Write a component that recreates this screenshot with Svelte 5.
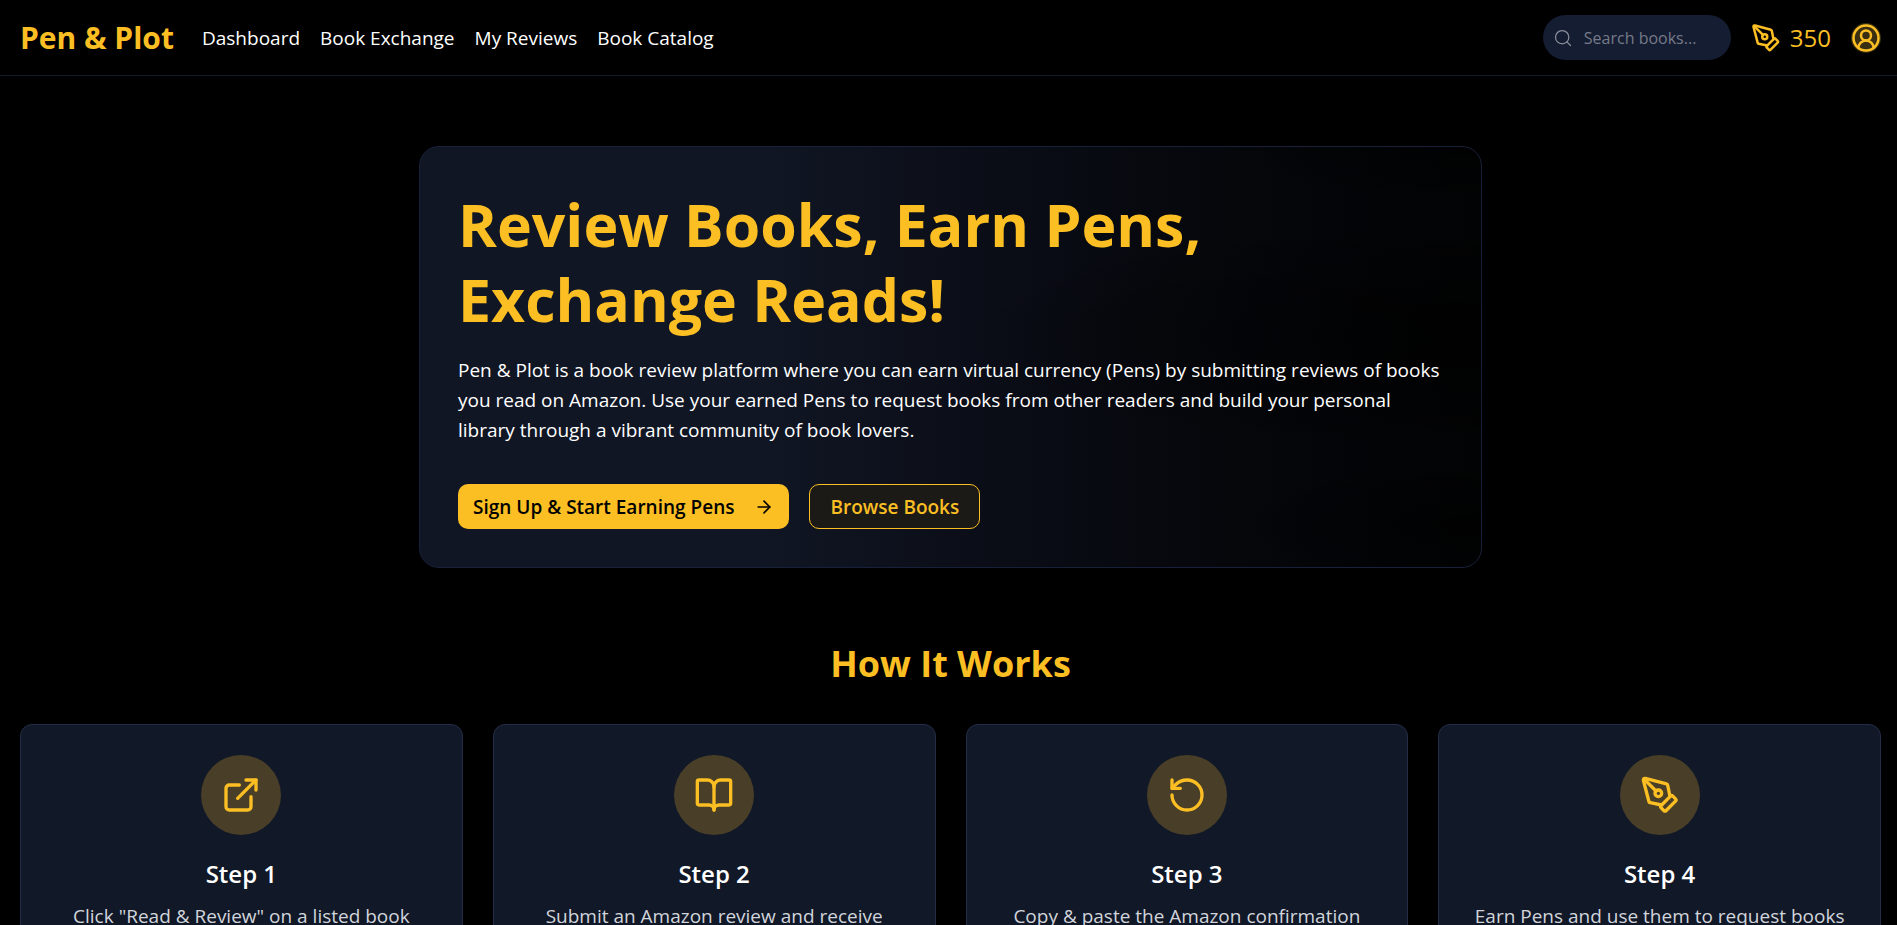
<script>
  let search = '';

  const links = ['Dashboard', 'Book Exchange', 'My Reviews', 'Book Catalog'];

  const steps = [
    { icon: 'external', title: 'Step 1', text: 'Click "Read & Review" on a listed book' },
    { icon: 'book', title: 'Step 2', text: 'Submit an Amazon review and receive' },
    { icon: 'rotate', title: 'Step 3', text: 'Copy & paste the Amazon confirmation' },
    { icon: 'pen', title: 'Step 4', text: 'Earn Pens and use them to request books' }
  ];

  const icons = {
    external: ['M15 3h6v6', 'M10 14 21 3', 'M18 13v6a2 2 0 0 1-2 2H5a2 2 0 0 1-2-2V8a2 2 0 0 1 2-2h6'],
    book: [
      'M12 7v14',
      'M3 18a1 1 0 0 1-1-1V4a1 1 0 0 1 1-1h5a4 4 0 0 1 4 4 4 4 0 0 1 4-4h5a1 1 0 0 1 1 1v13a1 1 0 0 1-1 1h-6a3 3 0 0 0-3 3 3 3 0 0 0-3-3z'
    ],
    rotate: ['M3 12a9 9 0 1 0 9-9 9.75 9.75 0 0 0-6.74 2.74L3 8', 'M3 3v5h5'],
    pen: [
      'M15.707 21.293a1 1 0 0 1-1.414 0l-1.586-1.586a1 1 0 0 1 0-1.414l5.586-5.586a1 1 0 0 1 1.414 0l1.586 1.586a1 1 0 0 1 0 1.414z',
      'm18 13-1.375-6.874a1 1 0 0 0-.746-.776L3.235 2.028a1 1 0 0 0-1.207 1.207L5.35 15.879a1 1 0 0 0 .776.746L13 18',
      'm2.3 2.3 7.286 7.286',
      'M9 11a2 2 0 1 0 4 0a2 2 0 1 0-4 0'
    ],
    search: ['m21 21-4.3-4.3', 'M3 11a8 8 0 1 0 16 0a8 8 0 1 0-16 0'],
    arrow: ['M5 12h14', 'm12 5 7 7-7 7'],
    user: [
      'M18 20a6 6 0 0 0-12 0',
      'M8 10a4 4 0 1 0 8 0a4 4 0 1 0-8 0',
      'M2 12a10 10 0 1 0 20 0a10 10 0 1 0-20 0'
    ]
  };
</script>

{#snippet icon(name, size, stroke = 2)}
  <svg
    width={size}
    height={size}
    viewBox="0 0 24 24"
    fill="none"
    stroke="currentColor"
    stroke-width={stroke}
    stroke-linecap="round"
    stroke-linejoin="round"
    aria-hidden="true"
  >
    {#each icons[name] as d}
      <path {d} />
    {/each}
  </svg>
{/snippet}

<div class="page">
  <header>
    <a class="logo" href="/">Pen &amp; Plot</a>
    <nav>
      {#each links as link}
        <a href="/">{link}</a>
      {/each}
    </nav>
    <div class="tools">
      <label class="search">
        {@render icon('search', 20, 1.5)}
        <input type="text" placeholder="Search books..." aria-label="Search books" bind:value={search} />
      </label>
      <div class="pens">
        {@render icon('pen', 30)}
        <span>350</span>
      </div>
      <button class="avatar" aria-label="Account">
        {@render icon('user', 30)}
      </button>
    </div>
  </header>

  <main>
    <section class="hero">
      <h1>Review Books, Earn Pens, Exchange Reads!</h1>
      <p>
        Pen &amp; Plot is a book review platform where you can earn virtual currency (Pens) by submitting
        reviews of books you read on Amazon. Use your earned Pens to request books from other readers and
        build your personal library through a vibrant community of book lovers.
      </p>
      <div class="actions">
        <button class="primary">
          Sign Up &amp; Start Earning Pens
          {@render icon('arrow', 20)}
        </button>
        <button class="outline">Browse Books</button>
      </div>
    </section>

    <section class="how">
      <h2>How It Works</h2>
      <div class="steps">
        {#each steps as step}
          <article>
            <div class="badge">{@render icon(step.icon, 40)}</div>
            <h3>{step.title}</h3>
            <p>{step.text}</p>
          </article>
        {/each}
      </div>
    </section>
  </main>
</div>

<style>
  :global(body) {
    margin: 0;
    background: #000;
  }
  .page {
    height: 100vh;
    overflow: hidden;
    background: #000;
    color: #fff;
    font-family: 'Segoe UI', 'Open Sans', 'Noto Sans', sans-serif;
    font-size: 19px;
    line-height: 30px;
  }
  h1, h2, h3, p {
    margin: 0;
  }
  a {
    color: inherit;
    text-decoration: none;
  }
  button, input {
    font: inherit;
    color: inherit;
  }
  button {
    cursor: pointer;
  }
  svg {
    display: block;
    flex-shrink: 0;
  }

  header {
    display: flex;
    align-items: center;
    gap: 28px;
    height: 75px;
    padding: 0 16px 0 20px;
    border-bottom: 1px solid #131b2c;
  }
  .logo {
    color: #fbbf24;
    font-size: 30px;
    font-weight: 700;
    line-height: 40px;
  }
  nav {
    display: flex;
    gap: 20px;
  }
  .tools {
    display: flex;
    align-items: center;
    gap: 20px;
    margin-left: auto;
    color: #fbbf24;
  }
  .search {
    display: flex;
    align-items: center;
    gap: 11px;
    box-sizing: border-box;
    width: 188px;
    height: 45px;
    padding: 0 12px 0 10px;
    border-radius: 23px;
    background: #151d32;
    color: #8b8f9c;
  }
  .search input {
    width: 100%;
    min-width: 0;
    padding: 0;
    border: 0;
    outline: 0;
    background: none;
    font-size: 16px;
  }
  .search input::placeholder {
    color: #757a88;
    opacity: 1;
  }
  .pens {
    display: flex;
    align-items: center;
    gap: 9px;
    font-size: 24px;
  }
  .avatar {
    padding: 0;
    border: 0;
    border-radius: 50%;
    background: #3b2f12;
    color: #fbbf24;
  }

  .hero {
    box-sizing: border-box;
    max-width: 1063px;
    margin: 70px auto 0;
    padding: 40px 38px 38px;
    border: 1px solid #19213a;
    border-radius: 20px;
    background:
      radial-gradient(ellipse 520px 120px at 100% 45%, rgba(0, 0, 0, 0.7), transparent),
      radial-gradient(ellipse 260px 70px at 100% 90%, rgba(0, 0, 0, 0.6), transparent),
      radial-gradient(ellipse 260px 60px at 100% 0, rgba(0, 0, 0, 0.6), transparent),
      linear-gradient(to right, #111624 32%, #0b0e18 52%, #07090f 68%, #030406 90%, #020304);
  }
  .hero h1 {
    max-width: 800px;
    color: #fbbf24;
    font-size: 59px;
    font-weight: 700;
    line-height: 75px;
  }
  .hero p {
    margin-top: 18px;
  }
  .actions {
    display: flex;
    gap: 20px;
    margin-top: 39px;
  }
  .actions button {
    display: flex;
    align-items: center;
    box-sizing: border-box;
    height: 45px;
    border-radius: 10px;
    font-weight: 600;
  }
  .primary {
    gap: 20px;
    padding: 0 15px;
    border: 0;
    background: #fbbf24;
    color: #000;
  }
  .outline {
    padding: 0 20px;
    border: 1px solid #fbbf24;
    background: #1c1a17;
    color: #fbbf24;
  }

  main {
    padding: 0 16px 0 20px;
  }
  .how {
    margin-top: 72px;
  }
  .how h2 {
    color: #fbbf24;
    font-size: 36px;
    font-weight: 700;
    line-height: 48px;
    text-align: center;
  }
  .steps {
    display: grid;
    grid-template-columns: repeat(4, 1fr);
    gap: 30px;
    margin-top: 36px;
  }
  article {
    display: flex;
    flex-direction: column;
    align-items: center;
    padding: 30px 30px 60px;
    border: 1px solid #242d48;
    border-radius: 12px;
    background: #111827;
    text-align: center;
  }
  .badge {
    display: grid;
    place-items: center;
    width: 80px;
    height: 80px;
    border-radius: 50%;
    background: #493e27;
    color: #fbbf24;
  }
  article h3 {
    margin-top: 20px;
    font-size: 24px;
    font-weight: 600;
    line-height: 38px;
  }
  article p {
    margin-top: 8px;
    color: #d1d5db;
  }
</style>
